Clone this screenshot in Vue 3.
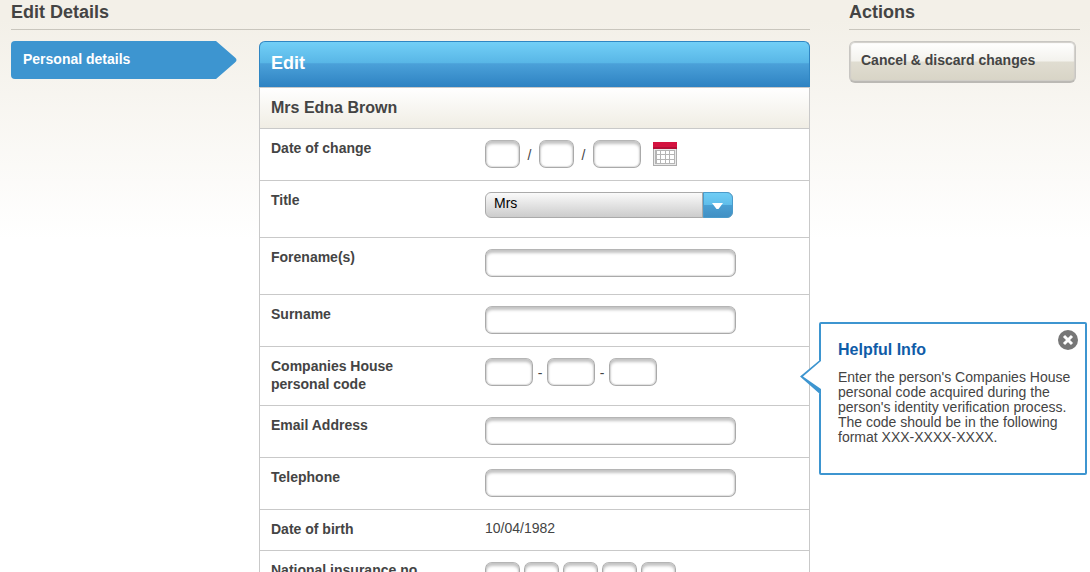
<script setup>
import { ref } from 'vue'

const title = ref('Mrs')
const helpOpen = ref(true)
const changeDate = [
  { id: 'day', label: 'Day', max: 2 },
  { id: 'month', label: 'Month', max: 2 },
  { id: 'year', label: 'Year', max: 4 },
]
</script>

<template>
  <div class="page">
    <main class="main">
      <h1 class="heading">Edit Details</h1>
      <div class="columns">
        <nav class="nav" aria-label="Sections">
          <a class="nav-link" href="#personal">
            <span>Personal details</span>
            <svg class="nav-tip" viewBox="0 0 22 38" preserveAspectRatio="none" aria-hidden="true">
              <path d="M0 0H1L20 16.500Q23 19 20 21.500L1 38H0Z" fill="#3d95d0" />
            </svg>
          </a>
        </nav>

        <form id="personal" class="panel" @submit.prevent>
          <h2 class="panel-title">Edit</h2>
          <h3 class="person">Mrs Edna Brown</h3>

          <div class="row" role="group" aria-labelledby="change-label">
            <span id="change-label" class="label">Date of change</span>
            <div class="field">
              <template v-for="(part, i) in changeDate" :key="part.id">
                <span v-if="i" class="slash">/</span>
                <input class="box" :class="part.max === 4 ? 'medium' : 'small'" type="text" :maxlength="part.max" :aria-label="part.label" />
              </template>
              <button class="calendar" type="button" aria-label="Choose a date">
                <svg width="24" height="24" viewBox="0 0 24 24" shape-rendering="crispEdges" aria-hidden="true">
                  <path d="M0 6H24V24H0Z" fill="#adadad" />
                  <path d="M1 6H23V23H1Z" fill="#e9e9e9" />
                  <path d="M0 0H24V7H0Z" fill="#d4123f" />
                  <path d="M0 5H24V7H0Z" fill="#b20f36" />
                  <path d="M2 8H22V22H2Z" fill="#b5b5b5" />
                  <path d="M4 9h3v3h-3zM8 9h4v3h-4zM13 9h3v3h-3zM17 9h4v3h-4zM4 13h3v4h-3zM8 13h4v4h-4zM13 13h3v4h-3zM17 13h4v4h-4zM4 18h3v3h-3zM8 18h4v3h-4zM13 18h3v3h-3zM17 18h4v3h-4z" fill="#fff" />
                </svg>
              </button>
            </div>
          </div>

          <div class="row tall">
            <label class="label" for="title">Title</label>
            <div class="field">
              <div class="picker">
                <select id="title" v-model="title">
                  <option>Mr</option>
                  <option>Mrs</option>
                  <option>Miss</option>
                  <option>Ms</option>
                </select>
                <span class="picker-arrow" aria-hidden="true">
                  <svg width="12" height="6" viewBox="0 0 12 6"><path d="M0 0H11L6.500 6H4.500Z" fill="#fff" /></svg>
                </span>
              </div>
            </div>
          </div>

          <div class="row tall">
            <label class="label" for="forenames">Forename(s)</label>
            <div class="field"><input id="forenames" class="box wide" type="text" /></div>
          </div>

          <div class="row">
            <label class="label" for="surname">Surname</label>
            <div class="field"><input id="surname" class="box wide" type="text" /></div>
          </div>

          <div class="row code" role="group" aria-labelledby="code-label">
            <span id="code-label" class="label">Companies House personal code</span>
            <div class="field">
              <template v-for="n in 3" :key="n">
                <span v-if="n > 1" class="dash">-</span>
                <input class="box medium" type="text" maxlength="4" :aria-label="`Code part ${n}`" />
              </template>
            </div>
            <aside v-if="helpOpen" class="help" aria-labelledby="help-title">
              <svg class="help-pointer" width="22" height="36" viewBox="0 0 22 36" aria-hidden="true">
                <path d="M22 0V36L19 34L2 18L19 2Z" fill="#fff" />
                <path d="M21 0V2L3 17.500L21 30V36L0 17.500Z" fill="#3d95d0" />
              </svg>
              <button class="help-close" type="button" aria-label="Close" @click="helpOpen = false">
                <svg width="20" height="20" viewBox="0 0 20 20" aria-hidden="true">
                  <circle cx="10" cy="10" r="10" fill="#777" />
                  <path d="M6 6L14 14M14 6L6 14" stroke="#fff" stroke-width="3" />
                </svg>
              </button>
              <h4 id="help-title">Helpful Info</h4>
              <p>Enter the person's Companies House personal code acquired during the person's identity verification process. The code should be in the following format XXX-XXXX-XXXX.</p>
            </aside>
          </div>

          <div class="row">
            <label class="label" for="email">Email Address</label>
            <div class="field"><input id="email" class="box wide" type="email" /></div>
          </div>

          <div class="row">
            <label class="label" for="phone">Telephone</label>
            <div class="field"><input id="phone" class="box wide" type="tel" /></div>
          </div>

          <div class="row short">
            <span class="label">Date of birth</span>
            <div class="field"><span class="value">10/04/1982</span></div>
          </div>

          <div class="row" role="group" aria-labelledby="ni-label">
            <span id="ni-label" class="label">National insurance no</span>
            <div class="field tight">
              <input v-for="n in 5" :key="n" class="box small" type="text" maxlength="2" :aria-label="`National insurance part ${n}`" />
            </div>
          </div>
        </form>
      </div>
    </main>

    <section class="actions">
      <h2 class="heading">Actions</h2>
      <button class="cancel" type="button">Cancel &amp; discard changes</button>
    </section>
  </div>
</template>

<style>
html {
  background: #fff;
  scrollbar-width: none;
}
</style>

<style scoped>
.page {
  box-sizing: border-box;
  display: flex;
  gap: 39px;
  min-height: 100vh;
  padding: 0 10px 0 11px;
  background: linear-gradient(#f3f0e8 0, #f3f0e8 20px, #fff 240px);
  color: #444;
  font: 14px/18px "Liberation Sans", Arial, sans-serif;
}
.page * {
  box-sizing: border-box;
}
.main {
  flex: 1;
  min-width: 0;
}
.actions {
  flex: 0 0 231px;
}
.heading {
  margin: 0 0 11px;
  padding: 2px 0 7px;
  border-bottom: 1px solid #c9c6bd;
  font-size: 18px;
  line-height: 20px;
}
.columns {
  display: flex;
  align-items: flex-start;
  gap: 22px;
}
.nav {
  flex: 0 0 226px;
}
.nav-link {
  display: flex;
  height: 38px;
  color: #fff;
  font-weight: bold;
  text-decoration: none;
}
.nav-link span {
  flex: 1;
  padding: 9px 12px;
  background: #3d95d0;
  border-radius: 4px 0 0 4px;
}
.nav-tip {
  width: 22px;
  height: 38px;
}
.panel {
  flex: 1;
  min-width: 0;
  border: 1px solid #c9c9c9;
  border-top: 0;
  border-radius: 6px 6px 0 0;
  background: #fff;
}
.panel-title {
  margin: 0 -1px;
  padding: 11px 11px 14px;
  border: 1px solid #2f86c3;
  border-bottom: 0;
  border-radius: 6px 6px 0 0;
  background: linear-gradient(#72cff7, #58b6e6 47%, #4ba1d9 48%, #2e82c2);
  color: #fff;
  font-size: 18px;
  line-height: 20px;
}
.person {
  margin: 0;
  padding: 10px 11px;
  border-top: 1px solid #c9c9c9;
  border-bottom: 1px solid #c9c9c9;
  background: linear-gradient(#fff, #f0ede4);
  font-size: 16px;
  line-height: 20px;
}
.row {
  position: relative;
  display: flex;
  min-height: 52px;
  padding: 10px 11px;
  border-bottom: 1px solid #c9c9c9;
}
.row.tall {
  min-height: 57px;
}
.row.code {
  min-height: 59px;
}
.row.short {
  min-height: 41px;
}
.label {
  flex: 0 0 150px;
  margin-right: 64px;
  font-weight: bold;
}
.field {
  display: flex;
  align-items: flex-start;
  padding-top: 1px;
}
.field.tight {
  gap: 4px;
}
.value {
  margin-top: -2px;
}
.box {
  height: 28px;
  padding: 0 8px;
  border: 1px solid #aaa;
  border-top-color: #b5b5b5;
  border-radius: 7px;
  background: #fff;
  box-shadow: inset 0 3px 3px #c4c4c4, inset 0 0 1px 1px #e2e2e2;
  color: #444;
  font: inherit;
}
.small {
  width: 35px;
}
.medium {
  width: 48px;
}
.wide {
  width: 251px;
}
.slash {
  width: 19px;
  padding-top: 6px;
  text-align: center;
}
.dash {
  width: 14px;
  padding-top: 6px;
  text-align: center;
}
.calendar {
  width: 24px;
  height: 24px;
  margin: 2px 0 0 12px;
  padding: 0;
  border: 0;
  background: none;
}
.calendar svg {
  display: block;
}
.picker {
  position: relative;
  width: 248px;
}
.picker select {
  appearance: none;
  display: block;
  width: 100%;
  height: 26px;
  padding: 0 38px 4px 8px;
  border: 1px solid #aaa;
  border-radius: 6px;
  background: linear-gradient(#fafafa, #ccc);
  color: #000;
  font: inherit;
}
.picker-arrow {
  position: absolute;
  top: 0;
  right: 0;
  display: flex;
  align-items: center;
  justify-content: center;
  width: 30px;
  height: 26px;
  padding-top: 2px;
  border: 1px solid #4a9bcb;
  border-radius: 0 6px 6px 0;
  background: linear-gradient(#70cdf5, #5fbdea 50%, #4a9fd3 51%, #4190c4);
  box-shadow: -1px 0 #aaa;
  pointer-events: none;
}
.help {
  position: absolute;
  z-index: 1;
  top: -25px;
  left: calc(100% + 10px);
  width: 268px;
  min-height: 153px;
  padding: 16px 8px 16px 17px;
  border: 2px solid #3d95d0;
  border-radius: 2px;
  background: #fff;
  line-height: 15px;
}
.help h4 {
  margin: 0 0 10px;
  color: #0f5ca8;
  font-size: 16px;
  line-height: 20px;
}
.help p {
  margin: 0;
}
.help-pointer {
  position: absolute;
  top: 35px;
  left: -21px;
}
.help-close {
  position: absolute;
  top: 6px;
  right: 7px;
  width: 20px;
  height: 20px;
  padding: 0;
  border: 0;
  background: none;
}
.help-close svg {
  display: block;
}
.cancel {
  display: block;
  width: calc(100% - 4px);
  height: 42px;
  padding: 0 11px 3px;
  border: 1px solid #c8c6c2;
  border-bottom: 2px solid #bbb9b4;
  border-radius: 6px;
  background: linear-gradient(#fff, #f3f2ed 49%, #e0ddd1 51%, #d8d4c6);
  box-shadow: inset 0 0 1px 1px #d0cec8;
  color: #444;
  font: bold 14px/18px "Liberation Sans", Arial, sans-serif;
  text-align: left;
}
</style>
